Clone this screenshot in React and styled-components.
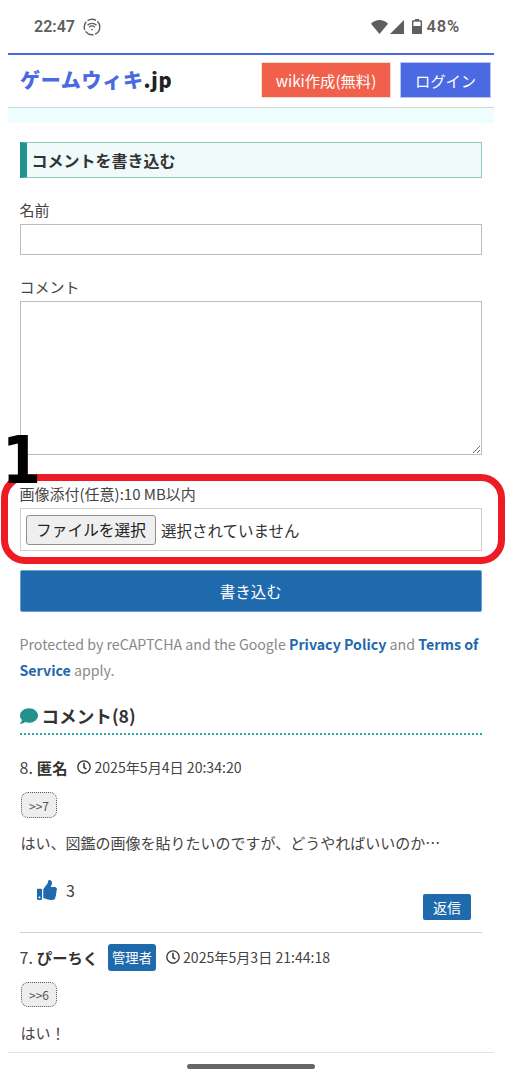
import React from 'react';
import styled, { createGlobalStyle } from 'styled-components';
import { FaComment, FaRegClock, FaThumbsUp } from 'react-icons/fa';

const GlobalStyle = createGlobalStyle`
  html, body { margin: 0; padding: 0; background: #fff; }
  body { font-family: "Noto Sans CJK JP", "Noto Sans", sans-serif; color: #333; }
  * { box-sizing: border-box; }
`;

const Screen = styled.div`
  position: relative;
  width: 508px;
  height: 1080px;
  overflow: hidden;
  display: flex;
  flex-direction: column;
`;

const StatusBar = styled.div`
  height: 53px;
  flex: none;
  padding: 0 48px 0 34px;
  display: flex;
  align-items: center;
  justify-content: space-between;
  font-family: Roboto, sans-serif;
  font-weight: 600;
  font-size: 16px;
  color: #5f5f5f;
`;

const StatusGroup = styled.div`
  display: flex;
  align-items: center;
  gap: ${({ $gap }) => $gap}px;
`;

const Percent = styled.span`
  font-size: 16.5px;
  letter-spacing: 0.8px;
`;

const Page = styled.div`
  flex: 1;
  min-height: 0;
  margin: 0 14px 0 8px;
  overflow: hidden;
  border-top: 2px solid #4a69e2;
`;

const Header = styled.header`
  height: 53px;
  padding: 7px 3px 0 12px;
  display: flex;
  align-items: flex-start;
  border-bottom: 1px solid #cfd4d4;
`;

const Logo = styled.div`
  flex: 1;
  padding-top: 3px;
  font-size: 20px;
  line-height: 30px;
  font-weight: 900;
  letter-spacing: 0.7px;
  color: #4a69e2;
  white-space: nowrap;
`;

const LogoSuffix = styled.span`
  color: #222;
`;

const HeaderButton = styled.a`
  height: 36px;
  margin-left: ${({ $ml }) => $ml}px;
  width: ${({ $w }) => $w}px;
  display: flex;
  align-items: center;
  justify-content: center;
  background: ${({ $bg }) => $bg};
  border: 1px solid ${({ $line }) => $line};
  color: #fff;
  font-size: 15.3px;
`;

const Strip = styled.div`
  height: 15px;
  background: #eefdfd;
`;

const Content = styled.main`
  padding: 19px 12px 0 11.5px;
`;

const FormTitle = styled.h2`
  margin: 0;
  height: 36px;
  padding-left: 5px;
  display: flex;
  align-items: center;
  background: #f0fafb;
  border: 1px solid #8cc7c4;
  border-left: 7px solid #23918c;
  font-size: 16px;
  font-weight: 700;
  color: #333;
`;

const Label = styled.label`
  display: block;
  font-size: 15px;
  line-height: 18px;
  color: #444;
  margin-top: ${({ $mt }) => $mt}px;
  margin-bottom: 5px;
`;

const TextInput = styled.input`
  display: block;
  width: 100%;
  height: 31px;
  background: #fff;
  border: 1px solid #bdbdbd;
  outline: none;
`;

const TextArea = styled.textarea`
  display: block;
  width: 100%;
  height: 154px;
  background: #fff;
  border: 1px solid #bdbdbd;
  outline: none;
`;

const FileBox = styled.div`
  height: 43px;
  padding: 0 5.5px;
  display: flex;
  align-items: center;
  gap: 5px;
  border: 1px solid #cfcfcf;
  font-size: 15.5px;
  color: #333;
`;

const FileButton = styled.button`
  height: 30px;
  width: 130px;
  padding: 0;
  font-family: inherit;
  font-size: 15.7px;
  color: #222;
  background: #efefef;
  border: 1px solid #8f8f8f;
  border-radius: 3px;
`;

const SubmitButton = styled.button`
  display: block;
  width: 100%;
  height: 42px;
  margin-top: 19px;
  padding: 0;
  font-family: inherit;
  font-size: 15.5px;
  color: #fff;
  background: #1f69ad;
  border: 1px solid #6a9fd0;
  border-radius: 2px;
`;

const Recaptcha = styled.p`
  margin: 19px 0 0;
  font-size: 14.2px;
  line-height: 26px;
  color: #888;
`;

const Strong = styled.a`
  color: #1f69ad;
  font-weight: 700;
`;

const CommentsTitle = styled.h3`
  margin: 21px 0 0;
  height: 31px;
  padding-bottom: 6px;
  display: flex;
  align-items: center;
  gap: 4px;
  font-size: 17.6px;
  font-weight: 700;
  color: #333;
  border-bottom: 2px dotted #2ba7a5;
  svg { color: #23918c; font-size: 18px; }
`;

const Comment = styled.article`
  padding-top: ${({ $pt }) => $pt}px;
  border-bottom: ${({ $last }) => ($last ? 'none' : '1px solid #cfcfcf')};
`;

const Meta = styled.div`
  height: 28px;
  display: flex;
  align-items: center;
  font-size: 16px;
  color: #444;
`;

const Author = styled.b`
  margin-left: 4px;
  font-size: 15.3px;
  font-weight: 700;
  color: #333;
`;

const AdminBadge = styled.span`
  height: 27px;
  width: 48px;
  margin-left: 10px;
  display: flex;
  align-items: center;
  justify-content: center;
  font-size: 13.3px;
  color: #fff;
  background: #1f69ad;
  border-radius: 3px;
`;

const DateText = styled.span`
  margin-left: 10px;
  display: flex;
  align-items: center;
  gap: 3px;
  font-size: 14.1px;
  svg { font-size: 14px; color: #333; }
`;

const Anchor = styled.span`
  width: 36px;
  height: ${({ $h }) => $h}px;
  margin: 11px 0 0 1.5px;
  display: flex;
  align-items: center;
  justify-content: center;
  font-size: 12px;
  color: #555;
  background: #eee;
  border: 1px dotted #555;
  border-radius: 7px;
`;

const Body = styled.p`
  margin: ${({ $mt }) => $mt}px 0 0 1px;
  font-size: 15px;
  line-height: 24px;
  color: #444;
`;

const Actions = styled.div`
  height: 77px;
  padding: 23px 11px 0 17.5px;
  display: flex;
  align-items: flex-start;
  justify-content: space-between;
`;

const Like = styled.div`
  display: flex;
  align-items: center;
  gap: 9px;
  font-size: 16px;
  color: #444;
  svg { font-size: 20px; color: #1f69ad; }
`;

const ReplyButton = styled.a`
  width: 48px;
  height: 26px;
  margin-top: 16px;
  display: flex;
  align-items: center;
  justify-content: center;
  font-size: 14px;
  color: #fff;
  background: #1f69ad;
  border-radius: 2px;
`;

const NavBar = styled.div`
  height: 28px;
  flex: none;
  margin: 0 14px 0 8px;
  padding-top: 11px;
  display: flex;
  justify-content: center;
  border-top: 1px solid #e3e3e3;
`;

const HomePill = styled.div`
  width: 128px;
  height: 5px;
  background: #666;
  border-radius: 3px;
`;

const Highlight = styled.div`
  position: absolute;
  left: 1px;
  top: 474px;
  width: 504px;
  height: 90px;
  border: 7px solid #ed1c24;
  border-radius: 24px;
  pointer-events: none;
`;

const Marker = styled.div`
  position: absolute;
  left: 1.5px;
  top: 422px;
  font-family: "DejaVu Sans", sans-serif;
  font-weight: 700;
  font-size: 66px;
  line-height: 78px;
  color: #000;
  transform: scaleX(0.85);
  transform-origin: left top;
`;

const WifiCircleIcon = () => (
  <svg width="20" height="20" viewBox="0 0 20 20" fill="none" stroke="#5f5f5f">
    <circle cx="10" cy="10" r="7.8" strokeWidth="1.4" strokeDasharray="9 1.6" />
    <path d="M5.5 8.2a6.5 6.5 0 0 1 9 0M7.2 10.2a4 4 0 0 1 5.6 0" strokeWidth="1.4" />
    <path d="M8.8 12.2a1.8 1.8 0 0 1 2.4 0L10 13.6z" fill="#5f5f5f" stroke="none" />
  </svg>
);

const WifiIcon = () => (
  <svg width="17" height="14" viewBox="0 0 17 14">
    <path d="M0 3.8C4.7 -1.2 12.3 -1.2 17 3.8L8.5 14z" fill="#5f5f5f" />
  </svg>
);

const SignalIcon = () => (
  <svg width="14" height="14" viewBox="0 0 14 14">
    <path d="M14 0V14H0z" fill="#5f5f5f" />
  </svg>
);

const BatteryIcon = () => (
  <svg width="10" height="15" viewBox="0 0 10 15">
    <path d="M3 0h4v1.3h2c.6 0 1 .4 1 1V14c0 .6-.4 1-1 1H1c-.6 0-1-.4-1-1V2.3c0-.6.4-1 1-1h2z" fill="#5f5f5f" />
    <rect x="1.4" y="2.7" width="7.2" height="4.3" fill="#fff" />
  </svg>
);

export default function App() {
  return (
    <Screen>
      <GlobalStyle />
      <StatusBar>
        <StatusGroup $gap={7}>
          <span>22:47</span>
          <WifiCircleIcon />
        </StatusGroup>
        <StatusGroup $gap={8}>
          <StatusGroup $gap={2}>
            <WifiIcon />
            <SignalIcon />
          </StatusGroup>
          <StatusGroup $gap={5}>
            <BatteryIcon />
            <Percent>48%</Percent>
          </StatusGroup>
        </StatusGroup>
      </StatusBar>

      <Page>
        <Header>
          <Logo>
            ゲームウィキ<LogoSuffix>.jp</LogoSuffix>
          </Logo>
          <HeaderButton $w={130} $bg="#f0604a" $line="#fbd9d3">wiki作成(無料)</HeaderButton>
          <HeaderButton $w={91} $ml={9} $bg="#4a69e2" $line="#b9c6f5">ログイン</HeaderButton>
        </Header>
        <Strip />

        <Content>
          <FormTitle>コメントを書き込む</FormTitle>
          <Label $mt={23}>名前</Label>
          <TextInput type="text" />
          <Label $mt={23}>コメント</Label>
          <TextArea />
          <Label $mt={30}>画像添付(任意):10 MB以内</Label>
          <FileBox>
            <FileButton type="button">ファイルを選択</FileButton>
            <span>選択されていません</span>
          </FileBox>
          <SubmitButton type="button">書き込む</SubmitButton>
          <Recaptcha>
            Protected by reCAPTCHA and the Google <Strong>Privacy Policy</Strong> and <Strong>Terms of Service</Strong> apply.
          </Recaptcha>

          <CommentsTitle>
            <FaComment />
            コメント(8)
          </CommentsTitle>

          <Comment $pt={18}>
            <Meta>
              8.<Author>匿名</Author>
              <DateText><FaRegClock />2025年5月4日 20:34:20</DateText>
            </Meta>
            <Anchor $h={26}>&gt;&gt;7</Anchor>
            <Body $mt={13}>はい、図鑑の画像を貼りたいのですが、どうやればいいのか…</Body>
            <Actions>
              <Like><FaThumbsUp />3</Like>
              <ReplyButton>返信</ReplyButton>
            </Actions>
          </Comment>

          <Comment $pt={10} $last>
            <Meta>
              7.<Author>ぴーちく</Author>
              <AdminBadge>管理者</AdminBadge>
              <DateText><FaRegClock />2025年5月3日 21:44:18</DateText>
            </Meta>
            <Anchor $h={25}>&gt;&gt;6</Anchor>
            <Body $mt={14}>はい！</Body>
          </Comment>
        </Content>
      </Page>

      <NavBar>
        <HomePill />
      </NavBar>

      <Highlight />
      <Marker>1</Marker>
    </Screen>
  );
}
